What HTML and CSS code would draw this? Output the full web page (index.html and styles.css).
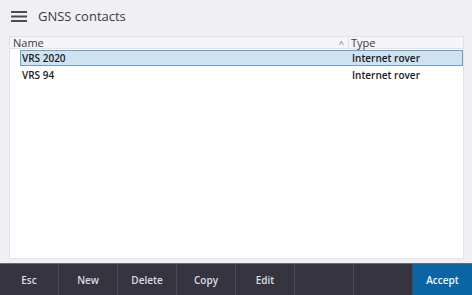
FILE: index.html
```html
<!DOCTYPE html>
<html lang="en">
<head>
  <meta charset="UTF-8" />
  <title>GNSS contacts</title>
  <link rel="stylesheet" href="styles.css">
</head>
<body>
  <div class="app">
    <div class="topbar">
      <svg class="menu-icon" width="16" height="11" viewBox="0 0 16 11">
        <rect x="0" y="0" width="16" height="2" fill="#4a4a55"/>
        <rect x="0" y="4.5" width="16" height="2" fill="#4a4a55"/>
        <rect x="0" y="9" width="16" height="2" fill="#4a4a55"/>
      </svg>
      <span class="title">GNSS contacts</span>
    </div>

    <div class="table">
      <div class="head">
        <div class="col-name">Name<span class="sort">^</span></div>
        <div class="col-type">Type</div>
      </div>
      <div class="row selected">
        <div class="col-name">VRS 2020</div>
        <div class="col-type">Internet rover</div>
      </div>
      <div class="row">
        <div class="col-name">VRS 94</div>
        <div class="col-type">Internet rover</div>
      </div>
    </div>

    <div class="footer">
      <button>Esc</button>
      <button>New</button>
      <button>Delete</button>
      <button>Copy</button>
      <button>Edit</button>
      <button></button>
      <button></button>
      <button class="accept">Accept</button>
    </div>
  </div>
</body>
</html>
```

FILE: styles.css
```css
* { box-sizing: border-box; }
body {
  margin: 0;
  font-family: "Open Sans", "Noto Sans", sans-serif;
  background: #f0f0f4;
}
.app {
  width: 472px;
  height: 295px;
  display: flex;
  flex-direction: column;
}
.topbar {
  height: 36px;
  display: flex;
  align-items: center;
  padding: 0 0 4px 11px;
}
.menu-icon {
  margin-right: 11px;
}
.title {
  font-size: 13px;
  color: #3a3a44;
}
.table {
  flex: 1;
  margin: 0 8px 4px 9px;
  background: #fff;
  border: 1px solid #e2e2e8;
  border-top: 0;
}
.head {
  display: flex;
  height: 13px;
  background: #f5f5f8;
  border-top: 1px solid #e2e2e8;
  border-bottom: 1px solid #e2e2e8;
  font-size: 11px;
  line-height: 12px;
  color: #3a3a44;
}
.head .col-name {
  position: relative;
  width: 339px;
  padding-left: 3px;
  border-right: 1px solid #e2e2e8;
}
.sort {
  position: absolute;
  right: 4px;
  top: 1px;
  font-size: 9px;
  color: #666;
}
.col-type {
  flex: 1;
  padding-left: 2px;
}
.row {
  display: flex;
  height: 16px;
  margin: 1px 0 0 10px;
  font-size: 10px;
  font-weight: 600;
  line-height: 14px;
  color: #1a1a22;
  border: 1px solid transparent;
}
.row .col-name {
  width: 329px;
  padding-left: 1px;
}
.row.selected {
  background: #cfe2f2;
  border: 1px solid #6e9fc9;
}
.footer {
  height: 32px;
  border-top: 1px solid #6a6a74;
  display: grid;
  grid-template-columns: repeat(8, 1fr);
  background: #35343f;
}
.footer button {
  border: 0;
  border-right: 1px solid #4b4a56;
  background: #35343f;
  color: #dedee6;
  font-family: inherit;
  font-size: 10px;
  font-weight: 600;
  padding: 0;
}
.footer button.accept {
  background: #0b64a3;
  border-right: 0;
  color: #f2f6fa;
}
```
